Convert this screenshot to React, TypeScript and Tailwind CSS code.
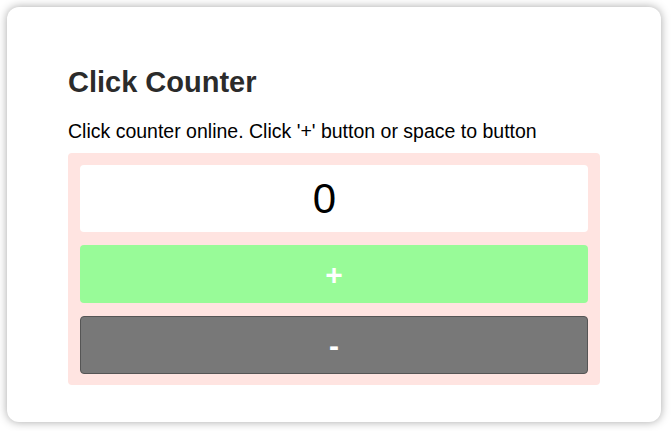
import React, { useState } from "react";

export default function App() {
  const [count, setCount] = useState(0);

  return (
    <div className="min-h-screen bg-white p-[7px] font-['Liberation_Sans',Arial,sans-serif]">
      <div className="h-[415px] w-[654px] rounded-xl bg-white px-[61px] pt-[59px] shadow-[0_0_10px_rgba(0,0,0,0.35)]">
        <h2 className="text-[29px] font-bold leading-[32px] text-[#2b2b2b]">Click Counter</h2>
        <p className="mt-[21px] text-[19.5px] leading-[24px] text-black">
          Click counter online. Click '+' button or space to button
        </p>
        <div className="mt-[10px] flex flex-col gap-[13px] rounded bg-[#ffe4e1] px-3 pt-3 pb-[11px]">
          <div className="flex h-[67px] shrink-0 items-center justify-center rounded bg-white pr-[19px] text-[42px] leading-none text-black">
            {count}
          </div>
          <button
            onClick={() => setCount((c) => c + 1)}
            className="h-[58px] shrink-0 rounded bg-[#98fb98] text-[30px] font-bold text-white"
          >
            +
          </button>
          <button
            onClick={() => setCount((c) => c - 1)}
            className="h-[58px] shrink-0 rounded border border-[#555] bg-[#787878] text-[30px] font-bold text-white"
          >
            -
          </button>
        </div>
      </div>
    </div>
  );
}
